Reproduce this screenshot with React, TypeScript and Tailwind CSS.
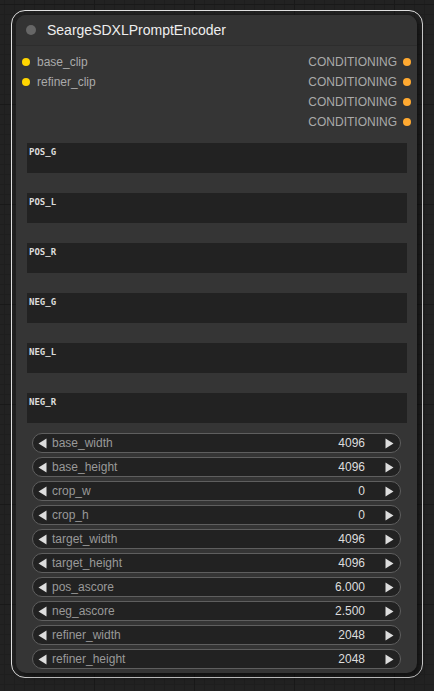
import React from 'react';

const inputs = ['base_clip', 'refiner_clip'];
const prompts = ['POS_G', 'POS_L', 'POS_R', 'NEG_G', 'NEG_L', 'NEG_R'];
const widgets: [string, string][] = [
  ['base_width', '4096'],
  ['base_height', '4096'],
  ['crop_w', '0'],
  ['crop_h', '0'],
  ['target_width', '4096'],
  ['target_height', '4096'],
  ['pos_ascore', '6.000'],
  ['neg_ascore', '2.500'],
  ['refiner_width', '2048'],
  ['refiner_height', '2048'],
];

const Arrow = ({ dir }: { dir: 'left' | 'right' }) => (
  <svg width="9" height="11" viewBox="0 0 9 11" className="shrink-0">
    {dir === 'left' ? <polygon points="8.5,0.5 8.5,10.5 0.5,5.5" fill="#dddddd" /> : <polygon points="0.5,0.5 0.5,10.5 8.5,5.5" fill="#dddddd" />}
  </svg>
);

export default function App() {
  return (
    <div
      className="w-[434px] h-[691px] overflow-hidden bg-[#222222] pt-[10px] pl-[11px] font-['Liberation_Sans',Arial,sans-serif] bg-[linear-gradient(#191919_1px,transparent_1px),linear-gradient(90deg,#191919_1px,transparent_1px),linear-gradient(#1e1e1e_1px,transparent_1px),linear-gradient(90deg,#1e1e1e_1px,transparent_1px)] bg-[size:100px_100px,100px_100px,10px_10px,10px_10px] bg-[position:94px_4px,94px_4px,4px_4px,4px_4px]"
    >
      <div className="w-[412px] h-[668px] rounded-[14px] border border-[#e0e0e0] pt-[4px] pl-[4px]">
        <div className="w-[401px] h-[658px] rounded-[10px] bg-[#353535] shadow-[3px_3px_6px_rgba(0,0,0,0.55)] flex flex-col">
          {/* title */}
          <div className="h-[31px] flex items-center rounded-t-[10px] bg-[#333333] border-b border-[#2d2d2d]">
            <div className="ml-[10px] w-[10px] h-[10px] rounded-full bg-[#666666]" />
            <span className="ml-[11px] text-[14px] text-[#eeeeee]">SeargeSDXLPromptEncoder</span>
          </div>

          {/* slots */}
          <div className="pt-[6px] flex justify-between">
            <div className="flex flex-col">
              {inputs.map((n) => (
                <div key={n} className="h-[20px] flex items-center">
                  <div className="ml-[6px] w-[8px] h-[8px] rounded-full bg-[#ffd500]" />
                  <span className="ml-[7px] text-[12px] text-[#aaaaaa]">{n}</span>
                </div>
              ))}
            </div>
            <div className="flex flex-col items-end">
              {[0, 1, 2, 3].map((i) => (
                <div key={i} className="h-[20px] flex items-center">
                  <span className="text-[12px] text-[#aaaaaa]">CONDITIONING</span>
                  <div className="ml-[6px] mr-[6px] w-[8px] h-[8px] rounded-full bg-[#ffa931]" />
                </div>
              ))}
            </div>
          </div>

          {/* prompt text areas */}
          <div className="mt-[11px] flex flex-col gap-[20px] pl-[11px] pr-[10px]">
            {prompts.map((p) => (
              <div key={p} className="h-[30px] bg-[#222222] px-[2px] pt-[3px]">
                <span className="block text-[9px] leading-[12px] font-bold text-[#dddddd] font-['DejaVu_Sans_Mono',monospace]">{p}</span>
              </div>
            ))}
          </div>

          {/* number widgets */}
          <div className="mt-[10px] flex flex-col gap-[4px] px-[16px]">
            {widgets.map(([n, v]) => (
              <div key={n} className="h-[20px] rounded-full bg-[#222222] border border-[#5f5f5f] flex items-center pl-[5px] pr-[6px]">
                <Arrow dir="left" />
                <span className="ml-[5px] text-[12px] text-[#999999] flex-1">{n}</span>
                <span className="text-[12px] text-[#dddddd]">{v}</span>
                <span className="ml-[20px]">
                  <Arrow dir="right" />
                </span>
              </div>
            ))}
          </div>
        </div>
      </div>
    </div>
  );
}
